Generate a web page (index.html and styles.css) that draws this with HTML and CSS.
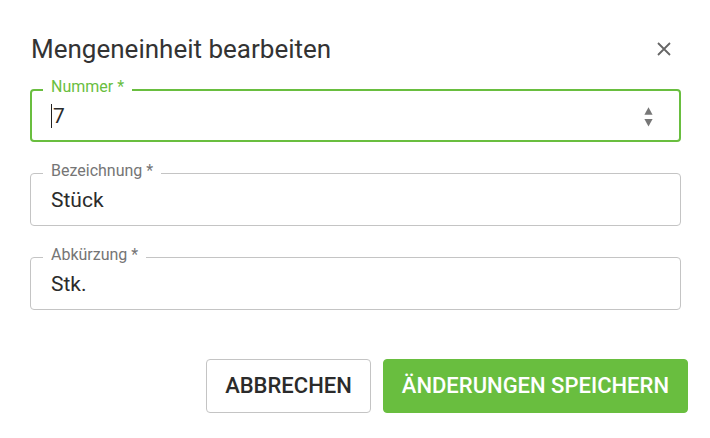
FILE: index.html
```html
<!DOCTYPE html>
<html lang="de">
<head>
<meta charset="utf-8">
<title>Mengeneinheit bearbeiten</title>
<link rel="stylesheet" href="styles.css">
</head>
<body>
<div class="dialog">
  <div class="header">
    <h2 class="title">Mengeneinheit bearbeiten</h2>
    <button class="close" aria-label="Schließen">
      <svg width="14" height="14" viewBox="0 0 14 14"><path d="M1 1L13 13M13 1L1 13" stroke="#666" stroke-width="1.8" fill="none"/></svg>
    </button>
  </div>
  <div class="fields">
    <fieldset class="field focused">
      <legend>Nummer *</legend>
      <div class="value-row">
        <span class="value"><span class="caret"></span>7</span>
        <svg class="spinner" width="9" height="20" viewBox="0 0 9 20"><path d="M4.5 0.3L8.6 7.8H0.4Z" fill="#777"/><path d="M0.4 12H8.6L4.5 19.5Z" fill="#777"/></svg>
      </div>
    </fieldset>
    <fieldset class="field">
      <legend>Bezeichnung *</legend>
      <div class="value-row"><span class="value">Stück</span></div>
    </fieldset>
    <fieldset class="field">
      <legend>Abkürzung *</legend>
      <div class="value-row"><span class="value">Stk.</span></div>
    </fieldset>
  </div>
  <div class="actions">
    <button class="btn btn-outline">ABBRECHEN</button>
    <button class="btn btn-primary">ÄNDERUNGEN SPEICHERN</button>
  </div>
</div>
</body>
</html>
```

FILE: styles.css
```css
html, body {
  margin: 0;
  padding: 0;
  background: #ffffff;
}
body {
  font-family: Roboto, "Liberation Sans", Arial, sans-serif;
  color: #2b2b2b;
}
.dialog {
  width: 710px;
  height: 438px;
  box-sizing: border-box;
  padding: 33px 29px 0 30px;
  display: flex;
  flex-direction: column;
}
.header {
  display: flex;
  align-items: center;
  justify-content: space-between;
  height: 32px;
  margin-bottom: 14px;
}
.title {
  margin: 0 0 0 1px;
  font-size: 26px;
  line-height: 32px;
  font-weight: 400;
  color: #333333;
}
.close {
  width: 24px;
  height: 24px;
  padding: 0;
  margin-right: 5px;
  border: 0;
  background: transparent;
  display: flex;
  align-items: center;
  justify-content: center;
}
.fields {
  display: flex;
  flex-direction: column;
  gap: 21px;
}
.field {
  margin: 0;
  min-width: 0;
  padding: 4px 20px 13px 20px;
  border: 1px solid #c4c4c4;
  border-radius: 4px;
}
.field legend {
  margin-left: -8px;
  padding: 0 8px 5px 8px;
  font-size: 16px;
  line-height: 16px;
  color: #757575;
}
.field.focused {
  border: 2px solid #69be3f;
  padding: 3px 19px 12px 19px;
}
.field.focused legend {
  padding-bottom: 6px;
  color: #69be3f;
}
.value-row {
  display: flex;
  align-items: center;
  justify-content: space-between;
  height: 24px;
}
.value {
  font-size: 21px;
  line-height: 24px;
  color: #2b2b2b;
}
.caret {
  display: inline-block;
  width: 0;
  height: 24px;
  border-left: 1px solid #222;
  vertical-align: top;
  margin-right: 1px;
}
.spinner {
  margin-right: 7px;
  margin-top: 1px;
}
.actions {
  display: flex;
  justify-content: flex-end;
  gap: 12px;
  margin-top: 49px;
  margin-right: -7px;
}
.btn {
  height: 54px;
  box-sizing: border-box;
  border-radius: 4px;
  font-family: Roboto, "Liberation Sans", Arial, sans-serif;
  font-size: 22px;
  font-weight: 500;
  line-height: 24px;
  padding: 0 18px;
  cursor: pointer;
}
.btn-outline {
  background: #ffffff;
  border: 1px solid #c4c4c4;
  color: #2b2b2b;
}
.btn-primary {
  background: #69be3f;
  border: 1px solid #69be3f;
  color: #ffffff;
}
```
